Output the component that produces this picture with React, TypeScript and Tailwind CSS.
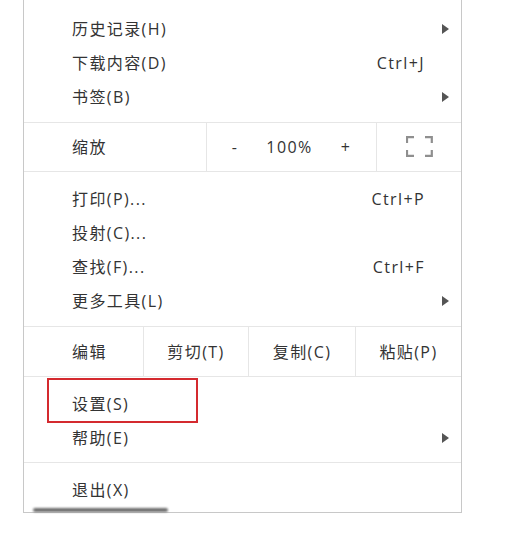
import React from "react";

const font = "font-['Segoe_UI','Open_Sans','Noto_Sans_CJK_SC',sans-serif]";

function Arrow() {
  return (
    <svg width="7" height="10" viewBox="0 0 7 10" className="block">
      <path d="M0 0 L7 5 L0 10 Z" fill="#555" />
    </svg>
  );
}

function FullscreenIcon() {
  return (
    <svg width="27" height="21" viewBox="0 0 27 21" fill="none" stroke="#8f8f8f" strokeWidth="2.2">
      <path d="M1 7 V1.2 H8" />
      <path d="M19 1.2 H25.8 V7" />
      <path d="M1 14 V19.8 H8" />
      <path d="M19 19.8 H25.8 V14" />
    </svg>
  );
}

function Item({ label, shortcut, sub }: { label: string; shortcut?: string; sub?: boolean }) {
  return (
    <div className="flex h-[34px] items-center pl-[48px]">
      <span className="flex-1">{label}</span>
      {shortcut && <span className="mr-[36px]">{shortcut}</span>}
      {sub && (
        <span className="mr-[12px]">
          <Arrow />
        </span>
      )}
    </div>
  );
}

export default function App() {
  return (
    <div className={`h-[550px] w-[510px] overflow-hidden bg-white text-[16px] tracking-[1.4px] text-[#333] ${font}`}>
      <div className="relative ml-[23px] w-[439px] border-x border-b border-[#c8c8c8] bg-white">
        <div className="pt-[12px] pb-[8px]">
          <Item label="历史记录(H)" sub />
          <Item label="下载内容(D)" shortcut="Ctrl+J" />
          <Item label="书签(B)" sub />
        </div>

        <div className="flex h-[50px] border-y border-[#e6e6e6]">
          <div className="flex w-[182px] items-center pl-[48px]">缩放</div>
          <div className="flex w-[171px] items-center justify-center gap-[28px] border-x border-[#e6e6e6]">
            <span>-</span>
            <span>100%</span>
            <span>+</span>
          </div>
          <div className="flex flex-1 items-center justify-center pb-[2px]">
            <FullscreenIcon />
          </div>
        </div>

        <div className="pt-[10px] pb-[8px]">
          <Item label="打印(P)..." shortcut="Ctrl+P" />
          <Item label="投射(C)..." />
          <Item label="查找(F)..." shortcut="Ctrl+F" />
          <Item label="更多工具(L)" sub />
        </div>

        <div className="flex h-[51px] border-y border-[#e6e6e6]">
          <div className="flex w-[119px] items-center pl-[48px]">编辑</div>
          <div className="flex w-[106px] items-center justify-center border-x border-[#e6e6e6]">剪切(T)</div>
          <div className="flex w-[107px] items-center justify-center border-r border-[#e6e6e6]">复制(C)</div>
          <div className="flex flex-1 items-center justify-center">粘贴(P)</div>
        </div>

        <div className="relative pt-[10px] pb-[7px]">
          <Item label="设置(S)" />
          <Item label="帮助(E)" sub />
          <div className="absolute left-[23px] top-[1px] h-[45px] w-[151px] border-2 border-[#d42a2f]" />
        </div>

        <div className="border-t border-[#e6e6e6] pt-[10px] pb-[5px]">
          <Item label="退出(X)" />
        </div>

        <div className="absolute bottom-[0px] left-[9px] h-[4px] w-[135px] rounded-full bg-[#6e6e6e] blur-[1px]" />
      </div>

      <div className="mt-[35px] pl-[3px] text-[14px] text-[#999]">
        <span className="text-[#e07a90]">步骤</span>
        <span>：点击右上角</span>
      </div>
    </div>
  );
}
